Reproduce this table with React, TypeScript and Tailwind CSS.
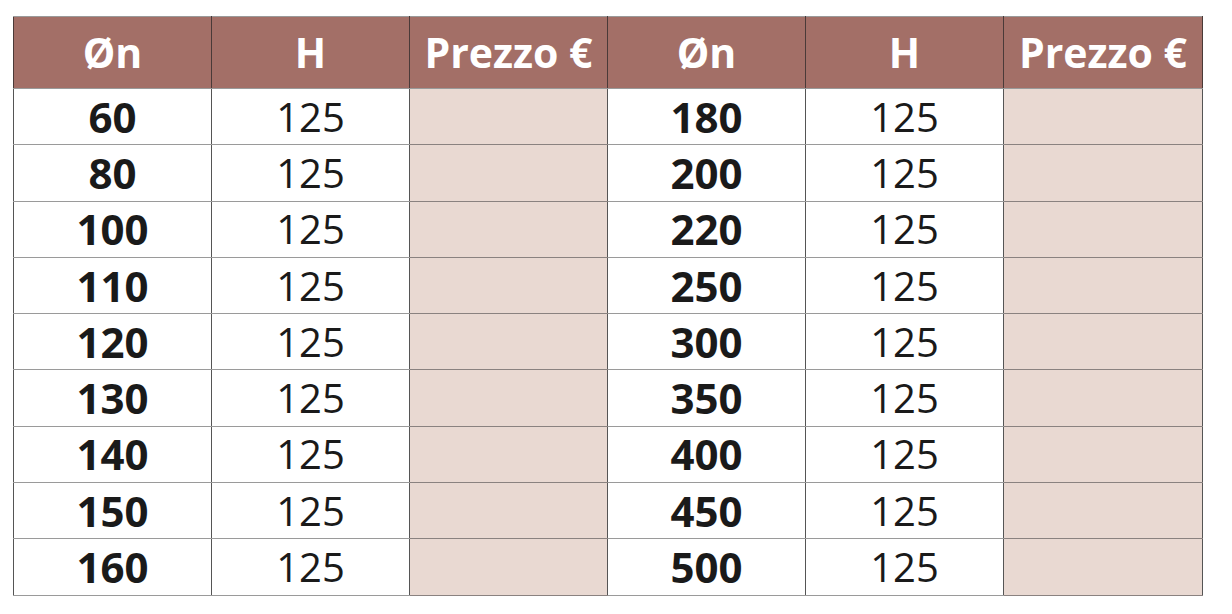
const left = [60, 80, 100, 110, 120, 130, 140, 150, 160]
const right = [180, 200, 220, 250, 300, 350, 400, 450, 500]

function HeaderCell({ label }: { label: string }) {
  return (
    <th className="border-x border-x-[#4a3a38] border-y border-y-[#9a9a9a] bg-[#a36f67] text-white font-bold text-[41px] text-center">
      {label}
    </th>
  )
}

export default function App() {
  return (
    <div className="w-[1232px] h-[614px] bg-white pt-[16px] pl-[13px] font-['Open_Sans','Liberation_Sans',sans-serif]">
      <table className="table-fixed border-collapse w-[1189px]">
        <colgroup>
          <col className="w-[198px]" />
          <col className="w-[198px]" />
          <col className="w-[198px]" />
          <col className="w-[198px]" />
          <col className="w-[198px]" />
          <col className="w-[199px]" />
        </colgroup>
        <thead>
          <tr className="h-[72px]">
            <HeaderCell label="Øn" />
            <HeaderCell label="H" />
            <HeaderCell label="Prezzo €" />
            <HeaderCell label="Øn" />
            <HeaderCell label="H" />
            <HeaderCell label="Prezzo €" />
          </tr>
        </thead>
        <tbody>
          {left.map((n, i) => (
            <tr key={n} className="h-[56.3px] text-[#1a1a1a] text-[40px] text-center leading-none">
              <td className="border-x border-x-[#555] border-y border-y-[#9a9a9a] font-bold text-[42px]">{n}</td>
              <td className="border-x border-x-[#555] border-y border-y-[#9a9a9a]">125</td>
              <td className="border-x border-x-[#555] border-y border-y-[#8a8280] bg-[#e9d9d2]"></td>
              <td className="border-x border-x-[#555] border-y border-y-[#9a9a9a] font-bold text-[42px]">{right[i]}</td>
              <td className="border-x border-x-[#555] border-y border-y-[#9a9a9a]">125</td>
              <td className="border-x border-x-[#555] border-y border-y-[#8a8280] bg-[#e9d9d2]"></td>
            </tr>
          ))}
        </tbody>
      </table>
    </div>
  )
}
